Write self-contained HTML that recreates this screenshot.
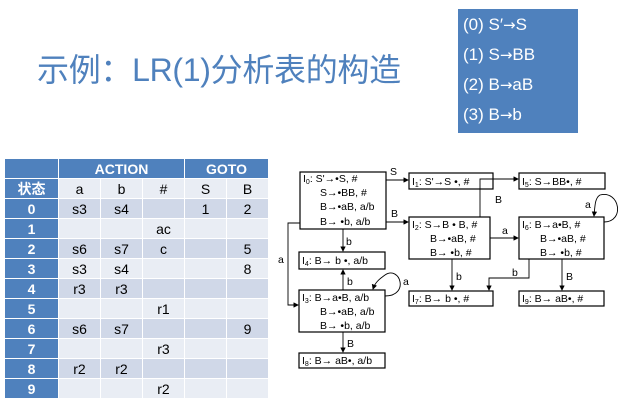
<!DOCTYPE html>
<html><head><meta charset="utf-8"><style>
body{margin:0;width:618px;height:400px;background:#fff;position:relative;overflow:hidden;font-family:"Liberation Sans","Noto Sans CJK SC",sans-serif}
.title{position:absolute;left:37px;top:45px;font-size:32px;color:#4f81bd;white-space:nowrap;letter-spacing:-0.3px}
.gram{position:absolute;left:458px;top:9px;width:120px;height:124px;background:#4f81bd;color:#fff;font-size:17px;box-sizing:border-box;padding:1px 0 0 5px;line-height:30px}
.ar{font-family:"DejaVu Sans",sans-serif;font-size:15px}
table{position:absolute;left:4px;top:158px;border-collapse:collapse;font-size:14px}
td{border:1px solid #fff;text-align:center;padding:0;height:19px;line-height:16px}
.h{background:#4f81bd;color:#fff;font-weight:bold}
.a{background:#d0d8e8}.b{background:#e9edf4}
svg text{font-family:"Liberation Sans",sans-serif;font-size:10.5px}
</style></head><body>
<div class="title">示例：LR(1)分析表的构造</div>
<div class="gram">(0) S′<span class="ar">→</span>S<br>(1) S<span class="ar">→</span>BB<br>(2) B<span class="ar">→</span>aB<br>(3) B<span class="ar">→</span>b</div>
<table>
<colgroup><col style="width:54px"><col style="width:42px"><col style="width:42px"><col style="width:42px"><col style="width:42px"><col style="width:42px"></colgroup>
<tr><td class="h" style="height:17px"></td><td class="h" colspan="3">ACTION</td><td class="h" colspan="2">GOTO</td></tr>
<tr class="b"><td class="h">状态</td><td>a</td><td>b</td><td>#</td><td>S</td><td>B</td></tr>
<tr class="a"><td class="h">0</td><td>s3</td><td>s4</td><td></td><td>1</td><td>2</td></tr>
<tr class="b"><td class="h">1</td><td></td><td></td><td>ac</td><td></td><td></td></tr>
<tr class="a"><td class="h">2</td><td>s6</td><td>s7</td><td>c</td><td></td><td>5</td></tr>
<tr class="b"><td class="h">3</td><td>s3</td><td>s4</td><td></td><td></td><td>8</td></tr>
<tr class="a"><td class="h">4</td><td>r3</td><td>r3</td><td></td><td></td><td></td></tr>
<tr class="b"><td class="h">5</td><td></td><td></td><td>r1</td><td></td><td></td></tr>
<tr class="a"><td class="h">6</td><td>s6</td><td>s7</td><td></td><td></td><td>9</td></tr>
<tr class="b"><td class="h">7</td><td></td><td></td><td>r3</td><td></td><td></td></tr>
<tr class="a"><td class="h">8</td><td>r2</td><td>r2</td><td></td><td></td><td></td></tr>
<tr class="b"><td class="h">9</td><td></td><td></td><td>r2</td><td></td><td></td></tr>
</table>
<svg width="618" height="400" style="position:absolute;left:0;top:0">
<defs><marker id="m" markerWidth="6" markerHeight="6" refX="5" refY="3" orient="auto"><path d="M0,0 L6,3 L0,6z" fill="#000"/></marker></defs>
<g fill="none" stroke="#000" stroke-width="1.2">
<rect x="300" y="172" width="86" height="57"/>
<rect x="409" y="173" width="84" height="16"/>
<rect x="519" y="173" width="86" height="16"/>
<rect x="409" y="217" width="81" height="42"/>
<rect x="519" y="217" width="85" height="42"/>
<rect x="299" y="252" width="86" height="17"/>
<rect x="299" y="290" width="86" height="42"/>
<rect x="409" y="291" width="84" height="15"/>
<rect x="519" y="291" width="85" height="15"/>
<rect x="299" y="353" width="86" height="15"/>
</g>
<g fill="none" stroke="#000" stroke-width="0.9" marker-end="url(#m)">
<path d="M386 180 H408"/>
<path d="M386 222 H408"/>
<path d="M343 229 V251"/>
<path d="M480 217 V179 H518"/>
<path d="M490 238 H518"/>
<path d="M604 222 C625 222 620 190 600 195 C595 198 595 205 594 216"/>
<path d="M452 259 V290"/>
<path d="M529 259 V278 H489 V290"/>
<path d="M562 259 V290"/>
<path d="M343 290 V270"/>
<path d="M385 296 C410 296 400 265 385 275 C378 280 375 283 373 289"/>
<path d="M343 332 V352"/>
<path d="M300 223 H288 V305 H298"/>
</g>
<g>
<text x="303" y="182">I<tspan font-size="7" dy="2">0</tspan><tspan dy="-2">: S'→•S, #</tspan></text>
<text x="320" y="196">S→•BB, #</text>
<text x="320" y="210">B→•aB, a/b</text>
<text x="320" y="225">B→ •b, a/b</text>
<text x="412" y="185">I<tspan font-size="7" dy="2">1</tspan><tspan dy="-2">: S'→S •, #</tspan></text>
<text x="522" y="185">I<tspan font-size="7" dy="2">5</tspan><tspan dy="-2">: S→BB•, #</tspan></text>
<text x="412" y="228">I<tspan font-size="7" dy="2">2</tspan><tspan dy="-2">: S→B • B, #</tspan></text>
<text x="430" y="242">B→•aB, #</text>
<text x="430" y="256">B→ •b, #</text>
<text x="522" y="228">I<tspan font-size="7" dy="2">6</tspan><tspan dy="-2">: B→a•B, #</tspan></text>
<text x="540" y="242">B→•aB, #</text>
<text x="540" y="256">B→ •b, #</text>
<text x="302" y="264">I<tspan font-size="7" dy="2">4</tspan><tspan dy="-2">: B→ b •, a/b</tspan></text>
<text x="302" y="301">I<tspan font-size="7" dy="2">3</tspan><tspan dy="-2">: B→a•B, a/b</tspan></text>
<text x="320" y="315">B→•aB, a/b</text>
<text x="320" y="329">B→ •b, a/b</text>
<text x="412" y="302">I<tspan font-size="7" dy="2">7</tspan><tspan dy="-2">: B→ b •, #</tspan></text>
<text x="522" y="302">I<tspan font-size="7" dy="2">9</tspan><tspan dy="-2">: B→ aB•, #</tspan></text>
<text x="302" y="364">I<tspan font-size="7" dy="2">8</tspan><tspan dy="-2">: B→ aB•, a/b</tspan></text>
<text x="390" y="175">S</text><text x="391" y="217">B</text><text x="346" y="245">b</text>
<text x="495" y="203">B</text><text x="502" y="234">a</text><text x="585" y="208">a</text>
<text x="456" y="280">b</text><text x="512" y="276">b</text><text x="566" y="280">B</text>
<text x="347" y="285">b</text><text x="403" y="285">a</text><text x="347" y="347">B</text>
<text x="278" y="263">a</text>
</g>
</svg>
</body></html>
